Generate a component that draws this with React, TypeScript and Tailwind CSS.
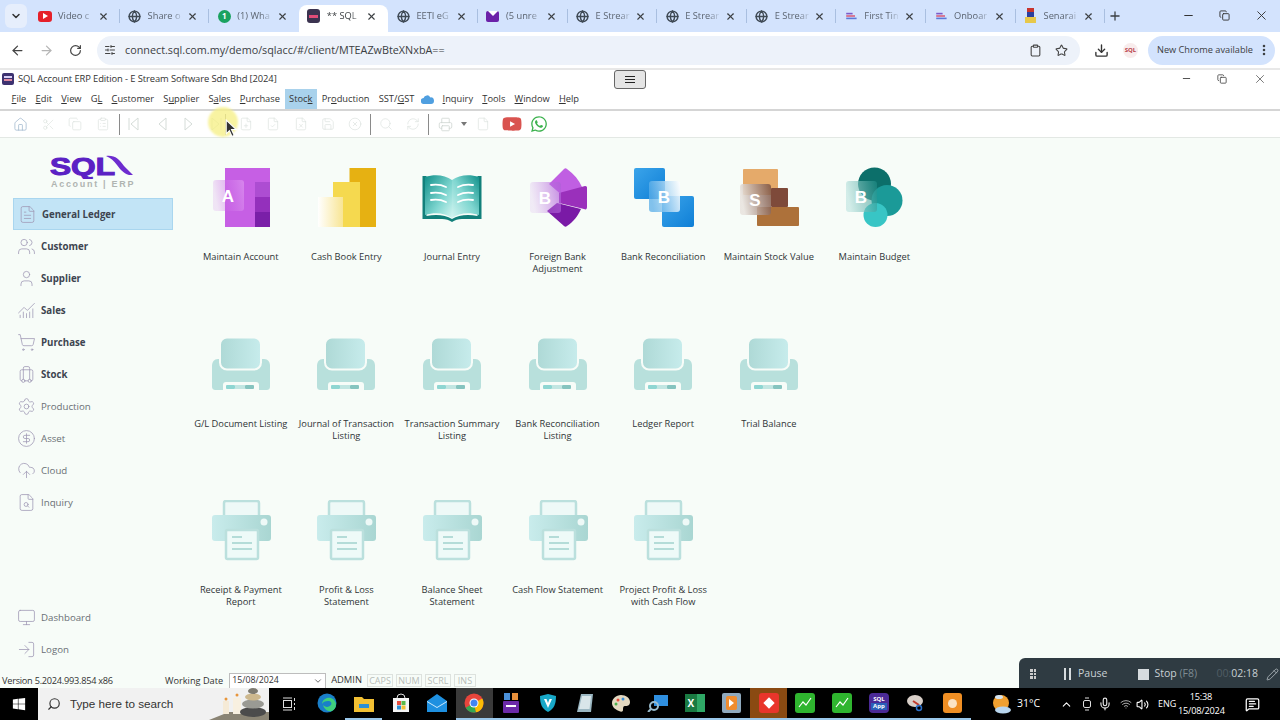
import { ArrowLeft, ArrowRight, RotateCw, ChevronDown, X, Plus, Minus, Star, Download, EllipsisVertical, Clipboard, SlidersHorizontal, Globe, Home, Scissors, Copy, ClipboardList, ChevronUp, Search, Pencil, Mic, Volume2, Wifi, Printer, RefreshCw, CircleX, Save, FileCheck, FilePlus, FileX, File, MessageSquareText, Users, User, ChartNoAxesCombined, ShoppingCart, Luggage, Settings, CircleDollarSign, CloudUpload, FileSearch, Monitor, LogIn, FileText } from "lucide-react";
import { FaWindows, FaWhatsapp, FaYoutube } from "react-icons/fa";
import type { ReactNode } from "react";

const uiFont = "font-['Open_Sans',sans-serif]";

function Favicon({ kind }: { kind: string }) {
  if (kind === "yt") return <div className="w-[14px] h-[11px] rounded-[3px] bg-[#e5202a] flex items-center justify-center"><div className="w-0 h-0 border-y-[3px] border-y-transparent border-l-[5px] border-l-white" /></div>;
  if (kind === "wa") return <div className="w-[13px] h-[13px] rounded-full bg-[#1aa260] text-white text-[8px] font-bold flex items-center justify-center">1</div>;
  if (kind === "sql") return <div className="w-[13px] h-[14px] rounded-[3px] bg-[#3b3350] flex items-center justify-center"><div className="w-[9px] h-[3px] bg-[#e04c78]" /></div>;
  if (kind === "mail") return <div className="w-[13px] h-[11px] rounded-[2px] bg-[#6b21a8] flex items-start justify-center"><div className="w-0 h-0 border-x-[5px] border-x-transparent border-t-[5px] border-t-white" /></div>;
  if (kind === "erp") return <svg width="14" height="8" viewBox="0 0 14 10"><rect x="1" y="1" width="8" height="2" fill="#7c5ac8" /><rect x="1" y="4" width="11" height="2" fill="#d9607c" /><rect x="1" y="7" width="13" height="2" fill="#5f79d8" /></svg>;
  if (kind === "sen") return <svg width="13" height="16" viewBox="0 0 13 16"><rect x="3" y="0" width="7" height="9" fill="#c8352e" /><rect x="3" y="4" width="7" height="5" fill="#2b3f9e" /><rect x="1" y="9" width="11" height="6" fill="#e7c84a" /></svg>;
  return <Globe size={13} strokeWidth={2.6} className="text-[#3f4a55]" />;
}

const tabs = [
  ["yt", "Video c"], ["g", "Share o"], ["wa", "(1) Wha"], ["sql", "** SQL"], ["g", "EETI eG"], ["mail", "(5 unre"],
  ["g", "E Strear"], ["g", "E Strear"], ["g", "E Strear"], ["erp", "First Tin"], ["erp", "Onboar"], ["sen", "Senarai"],
];

function ChromeBar() {
  return (
    <div className={uiFont}>
      <div className="h-[32px] bg-[#d3e3fd] flex items-end pl-[5px]">
        <div className="w-[22px] h-[24px] mb-[4px] mr-[3px] rounded-md bg-[#e6eefc] flex items-center justify-center"><ChevronDown size={12} strokeWidth={3} className="text-[#333]" /></div>
        {tabs.map(([k, label], i) => (
          <div key={i} className={`w-[89.6px] h-[27px] flex items-center pl-[7px] pb-[5px] text-[9.3px] ${i === 3 ? "bg-white rounded-t-lg text-[#3c4043]" : "text-[#5b6470]"}`}>
            <div className="w-[16px] flex justify-center shrink-0"><Favicon kind={k} /></div>
            <span className="ml-[5px] w-[36px] overflow-hidden whitespace-nowrap [mask-image:linear-gradient(to_right,black_65%,transparent)]">{label}</span>
            <X size={11} strokeWidth={2.4} className="ml-auto mr-[10px] text-[#3c4043]" />
            <div className={`w-px h-[14px] ${i === 2 || i === 3 ? "bg-transparent" : "bg-[#a9bfe0]"}`} />
          </div>
        ))}
        <Plus size={14} strokeWidth={2.2} className="ml-[3px] mb-[9px] text-[#3c4043]" />
        <div className="ml-auto flex items-center h-full pb-[1px] text-[#333]">
          <Minus size={13} className="mr-[24px]" />
          <Copy size={11} className="mr-[24px]" />
          <X size={15} strokeWidth={1.5} className="mr-[11px]" />
        </div>
      </div>
      <div className="h-[36px] bg-white flex items-center pl-[10px] pr-[5px]">
        <ArrowLeft size={15} className="text-[#444]" />
        <ArrowRight size={15} className="ml-[14px] text-[#b5b5b5]" />
        <RotateCw size={13} strokeWidth={2.2} className="ml-[15px] text-[#444]" />
        <div className="ml-[15px] w-[983px] h-[29px] rounded-full bg-[#edf2fa] flex items-center pl-[7px] pr-[12px]">
          <SlidersHorizontal size={12} className="text-[#444]" />
          <span className="ml-[9px] text-[10.8px] text-[#3c4043]">connect.sql.com.my/demo/sqlacc/#/client/MTEAZwBteXNxbA==</span>
          <Clipboard size={13} strokeWidth={2} className="ml-auto text-[#444]" />
          <Star size={13} strokeWidth={2} className="ml-[13px] text-[#444]" />
        </div>
        <Download size={15} strokeWidth={2.2} className="ml-[14px] text-[#333]" />
        <div className="ml-[14px] w-[15px] h-[15px] rounded-full bg-[#f8ecec] flex items-center justify-center text-[6px] font-bold text-[#b8404a]">SQL</div>
        <div className="ml-[10px] w-[127px] h-[29px] rounded-full bg-[#d3e3fd] flex items-center pl-[9px] text-[9.2px] text-[#3c4043] whitespace-nowrap">
          New Chrome available
          <EllipsisVertical size={14} strokeWidth={2.4} className="ml-[4px]" />
        </div>
      </div>
    </div>
  );
}

const menus: [string, string, string][] = [
  ["", "F", "ile"], ["", "E", "dit"], ["", "V", "iew"], ["G", "L", ""], ["", "C", "ustomer"], ["S", "u", "pplier"], ["S", "a", "les"],
  ["", "P", "urchase"], ["Stoc", "k", ""], ["Pr", "o", "duction"], ["SST/", "G", "ST"], ["CLOUD", "", ""], ["", "I", "nquiry"], ["", "T", "ools"], ["", "W", "indow"], ["", "H", "elp"],
];

function CloudGlyph() {
  return <svg width="13" height="9" viewBox="0 0 13 9"><path d="M3 9a3 3 0 0 1-.4-6A3.6 3.6 0 0 1 9.3 2.4 3.3 3.3 0 0 1 10 9z" fill="#4f9fe0" /></svg>;
}

function TitleAndMenu() {
  return (
    <div className={`bg-white ${uiFont} text-[#333]`}>
      <div className="h-[2px] bg-[#e8e8e8]" />
      <div className="h-[19px] flex items-center pl-[2px]">
        <div className="w-[12px] h-[12px] rounded-[2px] bg-[#3d3270] flex flex-col justify-center items-center mb-[2px]"><div className="w-[8px] h-[2px] bg-[#d8d0f5]" /><div className="w-[8px] h-[2px] mt-px bg-[#e08aa0]" /></div>
        <span className="ml-[4px] text-[9.4px] tracking-[-0.1px] whitespace-nowrap w-[256px]">SQL Account ERP Edition - E Stream Software Sdn Bhd [2024]</span>
        <div className="ml-[340px] w-[32px] h-[19px] mb-[1px] rounded-[3px] border border-[#666] bg-[#e5e5e5] flex flex-col gap-[2px] items-center justify-center">
          <div className="w-[10px] h-px bg-[#222]" /><div className="w-[10px] h-px bg-[#222]" /><div className="w-[10px] h-px bg-[#222]" />
        </div>
        <div className="ml-auto flex items-center text-[#444] mb-[2px]">
          <Minus size={11} className="mr-[25px]" />
          <Copy size={10} className="mr-[26px]" />
          <X size={14} strokeWidth={1.2} className="mr-[13px]" />
        </div>
      </div>
      <div className="h-[20px] flex items-center pl-[7px] text-[9.3px] border-b-2 border-b-[#d5d5d5] box-content">
        {menus.map(([a, u, b], i) => a === "CLOUD" ? (
          <div key={i} className="px-[2px] mr-[2px] flex items-center"><CloudGlyph /></div>
        ) : (
          <div key={i} className={`h-[20px] flex items-center px-[4.6px] whitespace-nowrap ${a === "Stoc" ? "bg-[#a9d2ec]" : ""}`}>
            {a}<span className="underline">{u}</span>{b}
          </div>
        ))}
      </div>
    </div>
  );
}

function TriLeft({ bar, flip }: { bar?: boolean; flip?: boolean }) {
  return (
    <svg width="14" height="16" viewBox="0 0 14 16" fill="none" stroke="#d5dcd8" className={flip ? "-scale-x-100" : ""}>
      <path d="M11 2 4 8l7 6z" />{bar && <path d="M2 2v12" />}
    </svg>
  );
}

function ToolBar() {
  const fade = "text-[#dde3df]";
  const cell = "w-[27.4px] flex justify-center";
  const sep = "w-px h-[21px] bg-[#8a8a8a]";
  return (
    <div className="h-[26px] bg-white border-b border-b-[#e3e8e4] flex items-center pl-[7px] box-content">
      <div className={cell}><Home size={15} strokeWidth={1.2} className="text-[#9db6cc]" /></div>
      <div className={cell}><Scissors size={13} strokeWidth={1.2} className={fade} /></div>
      <div className={cell}><Copy size={14} strokeWidth={1.2} className={fade} /></div>
      <div className={cell}><ClipboardList size={14} strokeWidth={1.2} className={fade} /></div>
      <div className={`${sep} ml-[2px] mr-[1px]`} />
      <div className={cell}><TriLeft bar /></div>
      <div className={cell}><TriLeft /></div>
      <div className={cell}><TriLeft flip /></div>
      <div className={cell}><TriLeft bar flip /></div>
      <div className={`${sep} -ml-[5px] mr-[6px]`} />
      <div className={cell}><FilePlus size={14} strokeWidth={1.2} className={fade} /></div>
      <div className={cell}><FileCheck size={14} strokeWidth={1.2} className={fade} /></div>
      <div className={cell}><FileX size={14} strokeWidth={1.2} className={fade} /></div>
      <div className={cell}><Save size={14} strokeWidth={1.2} className={fade} /></div>
      <div className={cell}><CircleX size={14} strokeWidth={1.2} className={fade} /></div>
      <div className={`${sep} ml-[1px] mr-[1px]`} />
      <div className={cell}><Search size={14} strokeWidth={1.2} className={fade} /></div>
      <div className={cell}><RefreshCw size={14} strokeWidth={1.2} className={fade} /></div>
      <div className={`${sep} ml-[1px] mr-[7px]`} />
      <div className="w-[20px] flex justify-center"><Printer size={15} strokeWidth={1.2} className="text-[#ccd3cf]" /></div>
      <div className="w-0 h-0 ml-[5px] border-x-[3px] border-x-transparent border-t-[4px] border-t-[#777]" />
      <div className="w-[32px] flex justify-center"><File size={14} strokeWidth={1.2} className={fade} /></div>
      <FaYoutube size={20} className="ml-[3px] text-[#d9534f]" />
      <FaWhatsapp size={18} className="ml-[8px] text-[#3db24f]" />
    </div>
  );
}

function Logo() {
  return (
    <div className="flex flex-col">
      <svg width="90" height="26" viewBox="0 0 90 26" className="block">
        <text x="0" y="22" textLength="65" lengthAdjust="spacingAndGlyphs" fontFamily="'Liberation Sans',sans-serif" fontWeight="700" fontSize="23" fill="#5b21c4" stroke="#5b21c4" strokeWidth="1">SQL</text>
        <path d="M56 3c9-1 13 3 18 10l9 9h-4c-6-2-9-6-12-10-3-4-6-7-11-9z" fill="#6d2ccf" />
      </svg>
      <div className="h-[10px] leading-[10px] text-[9px] pl-[1px] tracking-[1.7px] font-bold whitespace-nowrap text-[#b0b4b1] font-['Liberation_Sans',sans-serif]">Account | ERP</div>
    </div>
  );
}

const sideIcon = { size: 19, strokeWidth: 1, className: "text-[#a09ab5]" };

const sideItems: [string, ReactNode, boolean][] = [
  ["General Ledger", <FileText key="a" {...sideIcon} />, true],
  ["Customer", <Users key="b" {...sideIcon} />, true],
  ["Supplier", <User key="c" {...sideIcon} />, true],
  ["Sales", <ChartNoAxesCombined key="d" {...sideIcon} />, true],
  ["Purchase", <ShoppingCart key="e" {...sideIcon} />, true],
  ["Stock", <Luggage key="f" {...sideIcon} />, true],
  ["Production", <Settings key="g" {...sideIcon} />, false],
  ["Asset", <CircleDollarSign key="h" {...sideIcon} />, false],
  ["Cloud", <CloudUpload key="i" {...sideIcon} />, false],
  ["Inquiry", <FileSearch key="j" {...sideIcon} />, false],
];

function SideRow({ label, icon, bold, active }: { label: string; icon: ReactNode; bold: boolean; active?: boolean }) {
  return (
    <div className={`w-[160px] h-[32px] flex items-center pl-[3px] ${active ? "bg-[#c2e4f6] border border-[#a9d6ef]" : ""}`}>
      <div className="w-[20px] flex justify-center">{icon}</div>
      <span className={`ml-[5px] mt-[2px] text-[9.7px] ${bold ? "font-bold text-[#3d4450]" : "text-[#6a6f75]"}`}>{label}</span>
    </div>
  );
}

function Sidebar() {
  return (
    <div className={`w-[188px] shrink-0 flex flex-col pl-[13px] ${uiFont}`}>
      <div className="h-[60px] pt-[15px] pl-[37px]"><Logo /></div>
      {sideItems.map(([l, ic, b], i) => <SideRow key={l} label={l} icon={ic} bold={b} active={i === 0} />)}
      <div className="mt-auto mb-[7px]">
        <SideRow label="Dashboard" icon={<Monitor {...sideIcon} />} bold={false} />
        <SideRow label="Logon" icon={<LogIn {...sideIcon} />} bold={false} />
      </div>
    </div>
  );
}

function Tile({ x, y, from, to, letter, id, a = 0.2, b = 0.85 }: { x: number; y: number; from: string; to: string; letter: string; id: string; a?: number; b?: number }) {
  return (
    <>
      <defs>
        <linearGradient id={id} x1="0" x2="1" y1="0.2" y2="0">
          <stop offset="0" stopColor={from} stopOpacity={a} />
          <stop offset="1" stopColor={to} stopOpacity={b} />
        </linearGradient>
      </defs>
      <rect x={x} y={y} width="31" height="31" rx="3" fill={`url(#${id})`} />
      <text x={x + 15} y={y + 22} textAnchor="middle" fontFamily="'Liberation Sans',sans-serif" fontWeight="700" fontSize="17" fill="#fff">{letter}</text>
    </>
  );
}

function Svg({ children }: { children: ReactNode }) {
  return <svg width="62" height="62" viewBox="0 0 62 62">{children}</svg>;
}

function IconAccount() {
  return (
    <Svg>
      <rect x="15" y="1" width="45" height="59" fill="#c65fe4" />
      <rect x="45" y="15" width="15" height="15" fill="#ad4dd2" />
      <rect x="45" y="30" width="15" height="15" fill="#9430bc" />
      <rect x="45" y="45" width="15" height="15" fill="#7a1fa8" />
      <Tile x={3} y={13} from="#c65fe4" to="#d98bee" letter="A" id="t1" a={0.15} b={0.9} />
    </Svg>
  );
}

function IconCash() {
  return (
    <Svg>
      <defs>
        <linearGradient id="c1" x1="0" x2="1" y1="0" y2="0"><stop offset="0" stopColor="#ffffff" /><stop offset="1" stopColor="#f8e594" /></linearGradient>
      </defs>
      <rect x="34.500" y="1" width="26.500" height="59" fill="#e6b112" />
      <rect x="18" y="15" width="27" height="45" fill="#f5d94f" />
      <rect x="3" y="30" width="25" height="30" fill="url(#c1)" />
    </Svg>
  );
}

function IconJournal() {
  return (
    <Svg>
      <defs>
        <linearGradient id="j1" x1="0" x2="1" y1="0" y2="1"><stop offset="0" stopColor="#10908a" /><stop offset="0.6" stopColor="#7fd6d0" /><stop offset="1" stopColor="#d3f5f1" /></linearGradient>
        <linearGradient id="j2" x1="0" x2="1" y1="1" y2="0"><stop offset="0" stopColor="#d3f5f1" /><stop offset="0.5" stopColor="#7fd6d0" /><stop offset="1" stopColor="#10908a" /></linearGradient>
      </defs>
      <path d="M1.500 9h4v40c10-2 19-1 25.500 3 6.500-4 15.500-5 25.500-3V9h4v43H41c-4 0-7 1-10 3-3-2-6-3-10-3H1.500z" fill="#12807b" />
      <path d="M4 10c10-3 20-2 27 3v38C24 46 14 45 4 48z" fill="url(#j1)" />
      <path d="M58 10c-10-3-20-2-27 3v38C38 46 48 45 58 48z" fill="url(#j2)" />
      <g stroke="#fff" strokeWidth="1.800" fill="none" strokeLinecap="round">
        <path d="M10 18c6-1 11 0 15 2M10 26c6-1 11 0 15 2M10 33c6-1 11 0 15 2" />
        <path d="M52 18c-6-1-11 0-15 2M52 26c-6-1-11 0-15 2M52 33c-6-1-11 0-15 2" />
      </g>
    </Svg>
  );
}

function IconForeign() {
  return (
    <Svg>
      <path d="M37 2c1-1 2-1 3 0 7 5 12 11 15 18L36 29 22 17z" fill="#c05fe2" />
      <path d="M32 26 58 19c2 0 2 1 2 2v19c0 2-1 3-3 2L32 36z" fill="#9a30bb" />
      <path d="M30 36 54 42c-3 7-8 13-14 17-1 1-2 1-3 0L20 44z" fill="#7a1aa6" />
      <Tile x={3} y={15} from="#c988e8" to="#b05fd8" letter="B" id="t2" a={0.15} b={0.75} />
    </Svg>
  );
}

function IconBank() {
  return (
    <Svg>
      <defs>
        <linearGradient id="b1" x1="0" x2="1" y1="0" y2="1"><stop offset="0" stopColor="#3ba4ea" /><stop offset="1" stopColor="#0f7fd6" /></linearGradient>
      </defs>
      <rect x="2" y="1" width="31" height="31" rx="2" fill="url(#b1)" />
      <rect x="30" y="29" width="32" height="31" rx="2" fill="url(#b1)" />
      <Tile x={17} y={14} from="#5aaee8" to="#ffffff" letter="B" id="t3" a={0.75} b={0.9} />
    </Svg>
  );
}

function IconStock() {
  return (
    <Svg>
      <rect x="5" y="2" width="35" height="26" rx="1" fill="#e5aa6a" />
      <rect x="33" y="21" width="17" height="19" rx="1" fill="#7e4a3a" />
      <rect x="19" y="40" width="42" height="19" rx="1" fill="#ad713a" />
      <Tile x={2} y={17} from="#e9e4df" to="#7a5040" letter="S" id="t4" a={0.9} b={0.85} />
    </Svg>
  );
}

function IconBudget() {
  return (
    <Svg>
      <circle cx="31.500" cy="17" r="16.500" fill="#0c6f6a" />
      <circle cx="44" cy="33.500" r="15.500" fill="#1b9a98" />
      <circle cx="32.500" cy="48" r="12" fill="#38c5c5" />
      <Tile x={3} y={14} from="#c3e6e2" to="#1f8e88" letter="B" id="t5" a={0.7} b={0.55} />
    </Svg>
  );
}

function PrinterA({ id }: { id: string }) {
  return (
    <Svg>
      <defs>
        <linearGradient id={id} x1="0" x2="1" y1="0" y2="0"><stop offset="0" stopColor="#aed9d6" /><stop offset="1" stopColor="#c7ecec" /></linearGradient>
      </defs>
      <path d="M2 32c0-4 2-7 6-7h46c4 0 6 3 6 7v20c0 3-1 4-4 4H6c-3 0-4-1-4-4z" fill="#b8e0dc" />
      <rect x="10" y="3.500" width="41" height="32" rx="7" fill={`url(#${id})`} stroke="#f7fcf8" strokeWidth="2" />
      <path d="M13 56v-5c0-2 1-3 3-3h30c2 0 3 1 3 3v5z" fill="#f7fcf8" />
      <rect x="16" y="51" width="9" height="4" rx="1" fill="#8fd6d2" />
      <rect x="25" y="51" width="10" height="4" fill="#c2e6e2" />
      <rect x="35" y="51" width="9" height="4" rx="1" fill="#86c4bf" />
    </Svg>
  );
}

function PrinterB({ id }: { id: string }) {
  return (
    <Svg>
      <defs>
        <linearGradient id={id} x1="0" x2="1" y1="0" y2="0"><stop offset="0" stopColor="#c9ecec" /><stop offset="1" stopColor="#a9d6d2" /></linearGradient>
      </defs>
      <rect x="14" y="1" width="35" height="22" rx="2" fill="#eef9f7" stroke="#bbe0dd" strokeWidth="2.500" />
      <rect x="2" y="15" width="59" height="26" rx="3" fill={`url(#${id})`} />
      <circle cx="54" cy="22" r="3.500" fill="#eef9f7" />
      <rect x="16" y="30" width="32" height="29" rx="1.500" fill="#eefaf8" stroke="#bbe0dd" strokeWidth="2.500" />
      <g fill="#b4dcd8">
        <rect x="22" y="36" width="10" height="2" /><rect x="22" y="42" width="20" height="2" /><rect x="22" y="48" width="20" height="2" />
      </g>
    </Svg>
  );
}

const grid: [ReactNode, string][] = [
  [<IconAccount key="1" />, "Maintain Account"], [<IconCash key="2" />, "Cash Book Entry"], [<IconJournal key="3" />, "Journal Entry"],
  [<IconForeign key="4" />, "Foreign Bank Adjustment"], [<IconBank key="5" />, "Bank Reconciliation"], [<IconStock key="6" />, "Maintain Stock Value"], [<IconBudget key="7" />, "Maintain Budget"],
  [<PrinterA key="8" id="p1" />, "G/L Document Listing"], [<PrinterA key="9" id="p2" />, "Journal of Transaction Listing"], [<PrinterA key="10" id="p3" />, "Transaction Summary Listing"],
  [<PrinterA key="11" id="p4" />, "Bank Reconciliation Listing"], [<PrinterA key="12" id="p5" />, "Ledger Report"], [<PrinterA key="13" id="p6" />, "Trial Balance"], [null, ""],
  [<PrinterB key="14" id="q1" />, "Receipt & Payment Report"], [<PrinterB key="15" id="q2" />, "Profit & Loss Statement"], [<PrinterB key="16" id="q3" />, "Balance Sheet Statement"],
  [<PrinterB key="17" id="q4" />, "Cash Flow Statement"], [<PrinterB key="18" id="q5" />, "Project Profit & Loss with Cash Flow"],
];

function Launcher() {
  return (
    <div className={`pt-[29px] grid grid-cols-[repeat(7,105.6px)] auto-rows-[166.5px] ${uiFont}`}>
      {grid.map(([ic, label], i) => (
        <div key={i} className="flex flex-col items-center">
          <div className="h-[62px]">{ic}</div>
          <div className="mt-[22px] w-[100px] text-center text-[9.3px] leading-[12px] text-[#2f3437]">{label}</div>
        </div>
      ))}
    </div>
  );
}

function StatusBar() {
  const key = "h-[13px] flex items-center justify-center border border-[#dde2de] text-[9px] text-[#b7bcb9] mr-[3px]";
  return (
    <div className={`h-[16px] flex items-center pl-[2px] pt-[1px] text-[9.2px] text-[#333] bg-[#f7fcf8] ${uiFont}`}>
      <span className="w-[163px] whitespace-nowrap text-[9.2px] tracking-[-0.25px]">Version 5.2024.993.854 x86</span>
      <span>Working Date</span>
      <div className="ml-[6px] w-[97px] h-[16px] bg-white border border-[#bdbdbd] border-b-0 flex items-center pl-[2px] text-[8.8px]">
        15/08/2024<ChevronDown size={10} className="ml-auto mr-[2px] text-[#555]" />
      </div>
      <span className="ml-[5px] mr-[5px] text-[9.4px]">ADMIN</span>
      <span className={`${key} w-[26px]`}>CAPS</span><span className={`${key} w-[26px]`}>NUM</span><span className={`${key} w-[26px]`}>SCRL</span><span className={`${key} w-[22px]`}>INS</span>
    </div>
  );
}

function Square({ bg, children }: { bg: string; children?: ReactNode }) {
  return <div className={`w-[20px] h-[20px] rounded-[3px] flex items-center justify-center text-white text-[9px] font-bold ${bg}`}>{children}</div>;
}

const trendLine = <svg width="14" height="12" viewBox="0 0 14 12" fill="none" stroke="#fff" strokeWidth="1.2"><path d="M1 10 5 5l3 3 5-7" /></svg>;

const apps: [ReactNode, boolean, string][] = [
  [<svg key="e" width="20" height="20" viewBox="0 0 20 20"><circle cx="10" cy="10" r="9.500" fill="#1a7fc9" /><path d="M19 11c-1-5-5-7-9-6-3 1-5 3-5 6 1-2 3-3 6-3 3 0 4 2 3 4-3 3-6 2-8 0 1 4 5 7 9 6 2-1 4-3 4-7z" fill="#3fd07c" /></svg>, false, ""],
  [<svg key="f" width="20" height="17" viewBox="0 0 20 17"><path d="M0 2h8l2 2h10v13H0z" fill="#f2c033" /><rect x="5" y="9" width="10" height="4" fill="#2a8fd6" /></svg>, true, ""],
  [<svg key="s" width="18" height="20" viewBox="0 0 18 20"><path d="M1 5h16v14H1z" fill="#f4f4f4" /><path d="M5 5a4 4 0 0 1 8 0" stroke="#ddd" fill="none" /><rect x="5" y="8" width="4" height="4" fill="#e74c3c" /><rect x="9.500" y="8" width="4" height="4" fill="#5ab947" /><rect x="5" y="12.500" width="4" height="4" fill="#2a8fd6" /><rect x="9.500" y="12.500" width="4" height="4" fill="#f2c033" /></svg>, false, ""],
  [<svg key="m" width="20" height="18" viewBox="0 0 20 18"><path d="M0 7 10 0l10 7v11H0z" fill="#1e90e0" /><path d="M0 7l10 6 10-6v1L10 14 0 8z" fill="#cfeafc" /></svg>, false, ""],
  [<svg key="c" width="20" height="20" viewBox="0 0 20 20"><circle cx="10" cy="10" r="9.500" fill="#e8453c" /><path d="M10 10 1.700 14.800A9.500 9.500 0 0 0 12 19.300z" fill="#34a853" /><path d="M10 10 12 19.300A9.500 9.500 0 0 0 18.300 5.500z" fill="#fbbc05" /><circle cx="10" cy="10" r="4.500" fill="#fff" /><circle cx="10" cy="10" r="3.500" fill="#4285f4" /></svg>, true, "bg-[#3a3a3a]"],
  [<svg key="t" width="20" height="22" viewBox="0 0 20 22"><rect x="3" y="1" width="6" height="7" fill="#4a90d9" /><rect x="11" y="1" width="6" height="7" fill="#e8913c" /><rect x="2" y="9" width="16" height="12" rx="1" fill="#6c2aa8" /><rect x="5" y="13" width="10" height="2" fill="#fff" /></svg>, true, ""],
  [<svg key="v" width="18" height="20" viewBox="0 0 18 20"><path d="M1 3 9 1l8 2c0 8-2 13-8 16C3 16 1 11 1 3z" fill="#18a8c8" /><path d="M5 6l4 9 4-9h-2.500L9 10 7.500 6z" fill="#fff" /></svg>, true, ""],
  [<svg key="n" width="18" height="20" viewBox="0 0 18 20"><path d="M5 1h12l-2 18H1z" fill="#9bb7c2" /><path d="M6 3h9l-1.500 13H3z" fill="#d9e6ea" /></svg>, true, ""],
  [<svg key="p" width="20" height="20" viewBox="0 0 20 20"><path d="M10 2c5 0 9 3 9 7s-3 4-5 4-2 2-2 4-2 2-4 1C3 16 1 13 1 10c0-4 4-8 9-8z" fill="#e3d8c0" /><circle cx="7" cy="7" r="1.500" fill="#e74c3c" /><circle cx="12" cy="6" r="1.500" fill="#3d8fd6" /><circle cx="5" cy="11" r="1.500" fill="#4cae4c" /></svg>, true, ""],
  [<svg key="r" width="22" height="18" viewBox="0 0 22 18"><rect x="7" y="1" width="14" height="11" fill="#2f8fe0" /><circle cx="7" cy="12" r="4" fill="none" stroke="#9bc" strokeWidth="2" /><path d="M4 15l-3 3" stroke="#9bc" strokeWidth="2" /></svg>, true, ""],
  [<div key="x" className="flex"><div className="w-[12px] h-[18px] bg-[#1a7a42] text-white text-[10px] font-bold flex items-center justify-center">X</div><div className="w-[8px] h-[18px] bg-[#2fa866]" /></div>, true, ""],
  [<div key="w" className="w-[19px] h-[20px] bg-[#8fa9bd] rounded-[2px] flex items-center justify-center"><div className="w-[11px] h-[14px] bg-[#f08c2e] rounded-[2px] flex items-center justify-center"><div className="w-0 h-0 border-y-[4px] border-y-transparent border-l-[5px] border-l-white" /></div></div>, true, ""],
  [<Square key="rd" bg="bg-[#e8352b]"><div className="w-[8px] h-[8px] bg-white rotate-45" /></Square>, true, "bg-[#8a4a12]"],
  [<Square key="g1" bg="bg-[#2fb52f]">{trendLine}</Square>, true, ""],
  [<Square key="g2" bg="bg-[#2fb52f]">{trendLine}</Square>, true, ""],
  [<div key="sq" className="w-[20px] h-[20px] rounded-[4px] bg-[#4b2a96] flex flex-col items-center justify-center text-[6px] text-white font-bold leading-[7px]"><span>SQL</span><span className="bg-[#2a5fb8] px-[2px]">App</span></div>, true, ""],
  [<svg key="sn" width="20" height="20" viewBox="0 0 20 20"><ellipse cx="9" cy="8" rx="8" ry="6" fill="#d8cfc8" /><path d="M7 8l6 4" stroke="#c0392b" strokeWidth="2" /><circle cx="13" cy="15" r="2.500" fill="none" stroke="#2a6fc9" strokeWidth="1.500" /></svg>, true, ""],
  [<div key="o" className="w-[19px] h-[20px] rounded-[3px] bg-[#f08f24] flex items-center justify-center"><div className="w-[9px] h-[9px] rounded-full bg-[#fbe3c4]" /></div>, true, ""],
];

function Taskbar() {
  return (
    <div className={`h-[32px] bg-black flex items-center text-white ${uiFont}`}>
      <div className="w-[38px] flex justify-center"><FaWindows size={14} /></div>
      <div className="w-[231px] h-[32px] bg-[#f1f1f1] flex items-center pl-[9px] text-[#333] text-[11.700px] overflow-hidden">
        <Search size={14} className="-scale-x-100" />
        <span className="ml-[9px] font-['Liberation_Sans',sans-serif]">Type here to search</span>
        <svg width="60" height="32" viewBox="0 0 60 32" className="ml-auto shrink-0">
          <path d="M0 32 20 24h40v8z" fill="#8a8474" />
          <rect x="14" y="13" width="6" height="13" fill="#f5ead6" /><rect x="24" y="10" width="8" height="16" fill="#f8f0e0" />
          <circle cx="17" cy="11" r="1.500" fill="#e8963c" /><circle cx="28" cy="7" r="1.500" fill="#e8963c" />
          <ellipse cx="44" cy="24" rx="13" ry="5" fill="#4b4b4b" /><ellipse cx="44" cy="16" rx="11" ry="4.500" fill="#9a9a94" /><ellipse cx="44" cy="9" rx="8" ry="3.500" fill="#cdb88e" /><ellipse cx="44" cy="3" rx="5" ry="3" fill="#7d7a70" />
        </svg>
      </div>
      <div className="w-[39.6px] flex justify-center">
        <svg width="14" height="14" viewBox="0 0 14 14" fill="none" stroke="#ddd"><rect x="1.500" y="3.500" width="8" height="7" /><path d="M1 1h9M1 13h9M12.500 1v3M12.500 6v2M12.500 10v3" /></svg>
      </div>
      {apps.map(([ic, under, bg], i) => (
        <div key={i} className={`w-[36.8px] h-[32px] flex items-center justify-center border-b-2 ${under ? "border-b-[#9ac7ea]" : "border-b-transparent"} ${bg}`}>{ic}</div>
      ))}
      <div className="ml-[19px] w-[24px] flex justify-center">
        <svg width="22" height="22" viewBox="0 0 22 22"><circle cx="10" cy="10" r="8" fill="#f0a030" /><ellipse cx="12" cy="17" rx="8" ry="3.500" fill="#b9d6ee" /><ellipse cx="8" cy="4" rx="4" ry="2" fill="#d5e5f2" /></svg>
      </div>
      <span className="ml-[3px] w-[24px] text-[10.500px] whitespace-nowrap">31°C</span>
      <ChevronUp size={13} className="ml-[19px]" />
      <svg width="10" height="14" viewBox="0 0 10 14" fill="none" stroke="#ddd" className="ml-[9px]"><rect x="1.500" y="3.500" width="7" height="7" rx="1.500" /><path d="M3 1h4M3 13h4" /></svg>
      <Mic size={14} className="ml-[6px] text-[#e5e5e5]" />
      <Wifi size={12} className="ml-[8px] text-[#aaa]" />
      <Volume2 size={13} className="ml-[4px]" />
      <span className="ml-[9px] w-[17px] text-[9px]">ENG</span>
      <div className="ml-[3px] w-[46px] text-center text-[9.200px] leading-[14px] tracking-[-0.2px]"><div>15:38</div><div className="whitespace-nowrap">15/08/2024</div></div>
      <MessageSquareText size={15} className="ml-[21px]" />
    </div>
  );
}

function Recorder() {
  return (
    <div className={`absolute left-[1019px] top-[658px] w-[261px] h-[30px] rounded-tl-md bg-[#2f3b42] flex items-center pl-[11px] pt-[2px] text-[10.500px] text-[#c9d0d4] whitespace-nowrap ${uiFont}`}>
      <div className="grid grid-cols-2 gap-[1px] w-[6px]">
        {[0, 1, 2, 3, 4, 5].map((d) => <div key={d} className="w-[2.500px] h-[2.500px] bg-[#ccc]" />)}
      </div>
      <div className="ml-[28px] flex gap-[3px]"><div className="w-[2px] h-[12px] bg-[#d6dbde]" /><div className="w-[2px] h-[12px] bg-[#d6dbde]" /></div>
      <span className="ml-[7px]">Pause</span>
      <div className="ml-[30px] w-[11px] h-[11px] bg-[#d6dbde]" />
      <span className="ml-[6px] w-[47px]">Stop <span className="text-[#7e8b93]">(F8)</span></span>
      <span className="ml-[15px] text-[#4f5d65]">00:</span><span>02:18</span>
      <Pencil size={13} strokeWidth={1.3} className="ml-[8px]" />
    </div>
  );
}

function CursorMark() {
  return (
    <>
      <div className="absolute left-[208px] top-[107px] w-[30px] h-[30px] rounded-full bg-[#f6f08a]/80 blur-[1px]" />
      <svg width="13" height="19" viewBox="0 0 12 18" className="absolute left-[225px] top-[119px]">
        <path d="M1 1v13l3-3 2.500 5.500 2-1L6 10h4.500z" fill="#333" stroke="#fff" strokeWidth="1" />
      </svg>
    </>
  );
}

export default function App() {
  return (
    <div className="relative w-[1280px] h-[720px] overflow-hidden flex flex-col bg-[#f7fcf8]">
      <ChromeBar />
      <TitleAndMenu />
      <ToolBar />
      <div className="flex-1 flex min-h-0">
        <Sidebar />
        <Launcher />
      </div>
      <StatusBar />
      <Taskbar />
      <Recorder />
      <CursorMark />
    </div>
  );
}
